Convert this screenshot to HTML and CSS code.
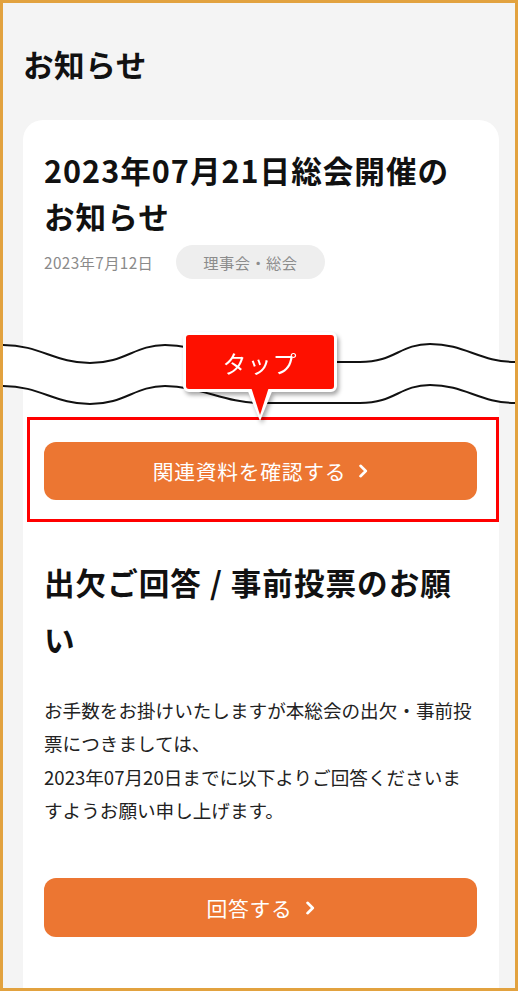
FILE: index.html
```html
<!DOCTYPE html>
<html lang="ja">
<head>
<meta charset="utf-8">
<title>お知らせ</title>
<link rel="stylesheet" href="styles.css">
</head>
<body>
<div class="frame">
  <h1 class="page-title">お知らせ</h1>
  <article class="card">
    <h2 class="title">2023年07月21日総会開催のお知らせ</h2>
    <div class="meta">
      <span class="date">2023年7月12日</span>
      <span class="tag">理事会・総会</span>
    </div>
    <a class="btn btn-docs">関連資料を確認する<svg class="chev" viewBox="0 0 10 14" width="10" height="14"><polyline points="2.5,1.8 7.8,7 2.5,12.2" fill="none" stroke="#fff" stroke-width="2.6" stroke-linecap="round" stroke-linejoin="round"/></svg></a>
    <h2 class="section">出欠ご回答 / 事前投票のお願い</h2>
    <p class="body">お手数をお掛けいたしますが本総会の出欠・事前投票につきましては、<br>2023年07月20日までに以下よりご回答くださいますようお願い申し上げます。</p>
    <a class="btn btn-answer">回答する<svg class="chev" viewBox="0 0 10 14" width="10" height="14"><polyline points="2.5,1.8 7.8,7 2.5,12.2" fill="none" stroke="#fff" stroke-width="2.6" stroke-linecap="round" stroke-linejoin="round"/></svg></a>
  </article>

  <svg class="wave" viewBox="3 330 512 80" width="512" height="80">
    <path fill="#fff" d="M3,345 C40,345 55,363 90,363 C125,363 135,345 165,345 C200,345 225,362 260,362 L360,362 C395,362 400,344 430,344 C465,344 480,362 515,362 L521,362 L521,403 L515,403 C480,403 465,385 430,385 C400,385 395,403 360,403 L260,403 C225,403 200,386 165,386 C135,386 125,404 90,404 C55,404 40,386 3,386 Z"/>
    <path fill="none" stroke="#111" stroke-width="2" d="M3,345 C40,345 55,363 90,363 C125,363 135,345 165,345 C200,345 225,362 260,362 L360,362 C395,362 400,344 430,344 C465,344 480,362 515,362 L521,362"/>
    <path fill="none" stroke="#111" stroke-width="2" d="M3,386 C40,386 55,404 90,404 C125,404 135,386 165,386 C200,386 225,403 260,403 L360,403 C395,403 400,385 430,385 C465,385 480,403 515,403 L521,403"/>
  </svg>

  <div class="highlight"></div>

  <div class="tip">
    <div class="tip-box">タップ</div>
    <svg class="tip-arrow" viewBox="0 0 30 37" width="30" height="37">
      <polygon points="2,2 28,2 15,34" fill="#fff"/>
      <polygon points="6,0 24,0 15,28" fill="#fe1000"/>
    </svg>
  </div>
</div>
</body>
</html>
```
FILE: styles.css
```css
* { box-sizing: border-box; }

html, body {
  margin: 0;
  padding: 0;
  background: #fff;
}

body {
  font-family: "Noto Sans CJK JP", "Noto Sans", sans-serif;
  color: #111;
}

.frame {
  position: relative;
  width: 518px;
  height: 991px;
  border: 3px solid #e2a23f;
  background: #f4f4f4;
  overflow: hidden;
  padding: 39px 0 0 20px;
}

.page-title {
  margin: 0;
  font-size: 30.6px;
  line-height: 45px;
  font-weight: 700;
  letter-spacing: 0.5px;
  color: #111;
}

.card {
  margin-top: 33px;
  width: 476px;
  min-height: 900px;
  background: #fff;
  border-radius: 20px;
  padding: 27px 22px 60px 21px;
}

.title {
  margin: 0;
  font-size: 30.6px;
  line-height: 46px;
  font-weight: 700;
  letter-spacing: 1px;
  color: #111;
}

.meta {
  display: flex;
  align-items: center;
  gap: 23px;
  margin-top: 6px;
}

.date {
  font-size: 15.3px;
  letter-spacing: 0.4px;
  color: #8a8a8a;
}

.tag {
  display: inline-flex;
  align-items: center;
  height: 34px;
  padding: 0 27px;
  border-radius: 17px;
  background: #eeeeee;
  color: #8c8c8c;
  font-size: 15.3px;
  letter-spacing: 0.4px;
}

.btn {
  display: flex;
  align-items: center;
  justify-content: center;
  height: 58px;
  border-radius: 12px;
  background: #ec7632;
  color: #fff;
  font-size: 20.8px;
  letter-spacing: 0.7px;
  text-decoration: none;
}

.btn-docs { margin-top: 163px; }

.btn-answer {
  margin-top: 52px;
  height: 59px;
}

.chev {
  margin-left: 12px;
  display: block;
}

.section {
  margin: 54px 0 0;
  font-size: 30.6px;
  line-height: 57px;
  font-weight: 700;
  letter-spacing: 1px;
  color: #111;
}

.body {
  margin: 25px 0 0;
  font-size: 18.6px;
  line-height: 33.3px;
  color: #222;
}

.wave {
  position: absolute;
  left: 0;
  top: 327px;
  z-index: 2;
  display: block;
}

.highlight {
  position: absolute;
  left: 24px;
  top: 414px;
  width: 472px;
  height: 105px;
  border: 3px solid #ff0000;
  z-index: 3;
}

.tip {
  position: absolute;
  left: 180px;
  top: 329px;
  width: 154px;
  height: 95px;
  z-index: 4;
  filter: drop-shadow(2px 3px 2px rgba(0, 0, 0, 0.35));
}

.tip-box {
  width: 154px;
  height: 60px;
  border: 3px solid #fff;
  border-radius: 6px;
  background: #fe1000;
  color: #fff;
  font-size: 24px;
  letter-spacing: 1px;
  display: flex;
  align-items: center;
  justify-content: center;
}

.tip-arrow {
  position: absolute;
  left: 62px;
  top: 55px;
  display: block;
}
```
